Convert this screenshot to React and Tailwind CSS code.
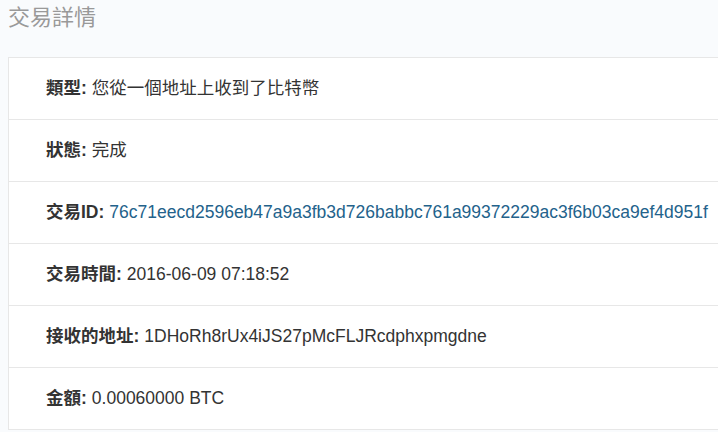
export default function App() {
  const font = { fontFamily: '"Liberation Sans", "Noto Sans CJK TC", Arial, sans-serif' };
  const rows = [
    { label: "類型:", value: "您從一個地址上收到了比特幣" },
    { label: "狀態:", value: "完成" },
    { label: "交易ID:", value: "76c71eecd2596eb47a9a3fb3d726babbc761a99372229ac3f6b03ca9ef4d951f", link: true },
    { label: "交易時間:", value: "2016-06-09 07:18:52" },
    { label: "接收的地址:", value: "1DHoRh8rUx4iJS27pMcFLJRcdphxpmgdne" },
    { label: "金額:", value: "0.00060000 BTC" },
  ];
  return (
    <div className="min-h-[432px] w-[718px] overflow-hidden bg-[#f9fbfd]" style={font}>
      <div className="h-[57px] pl-2 pt-[2px]">
        <h3 className="text-[22px] leading-[32px] text-[#999999] font-normal">交易詳情</h3>
      </div>
      <div className="ml-2 border-t border-l border-[#e7e7e7] bg-white">
        {rows.map((r, i) => (
          <div key={i} className="flex h-[62px] items-center border-b border-[#e7e7e7] pl-[37px] text-[17.5px] text-[#333333] whitespace-nowrap">
            <span className="font-bold">{r.label}</span>
            <span className={"ml-[5px] " + (r.link ? "text-[#23628b]" : "")}>{r.value}</span>
          </div>
        ))}
      </div>
    </div>
  );
}
